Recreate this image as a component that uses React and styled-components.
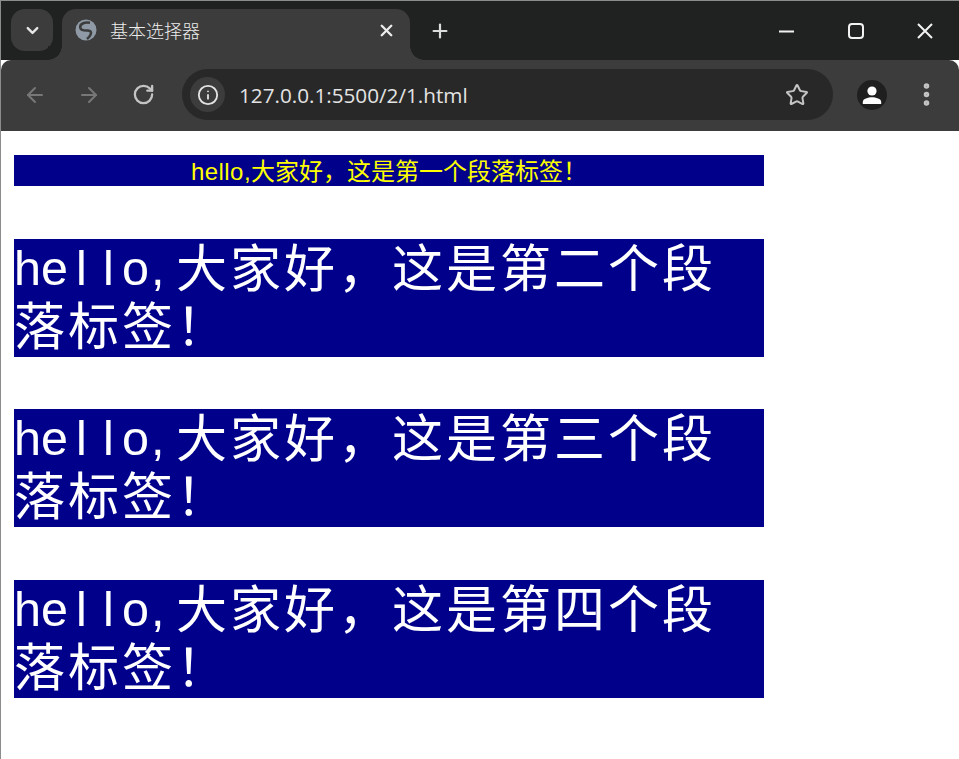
import React from 'react'
import styled, { createGlobalStyle } from 'styled-components'
import { ArrowLeft, ArrowRight, RotateCw, Star, X, Plus, ChevronDown, Info, EllipsisVertical } from 'lucide-react'

const Global = createGlobalStyle`
  html, body { margin: 0; padding: 0; background: #fff; }
  body { font-family: "Noto Sans", "Noto Sans CJK SC", sans-serif; }
`

const Page = styled.div`
  width: 959px;
  height: 759px;
  box-sizing: border-box;
  border-left: 1px solid #8c8c8c;
  border-top: 1px solid #8c8c8c;
  overflow: hidden;
  background: #fff;
`

const TabStrip = styled.div`
  display: flex;
  align-items: flex-start;
  height: 59px;
  padding: 8px 0 0 10px;
  box-sizing: border-box;
  background: #202221;
`

const SquareButton = styled.div`
  display: flex;
  align-items: center;
  justify-content: center;
  width: 42px;
  height: 42px;
  border-radius: 14px;
  background: #3c3c3c;
  color: #e6e6e6;
`

const Tab = styled.div`
  position: relative;
  display: flex;
  align-items: center;
  width: 348px;
  height: 51px;
  margin-left: 9px;
  padding: 0 14px 9px 13px;
  box-sizing: border-box;
  border-radius: 14px 14px 0 0;
  background: #3c3c3c;
  color: #ececec;

  &::before, &::after {
    content: '';
    position: absolute;
    bottom: 0;
    width: 14px;
    height: 14px;
  }
  &::before {
    left: -14px;
    background: radial-gradient(circle at 0 0, #202221 13.5px, #3c3c3c 14px);
  }
  &::after {
    right: -14px;
    background: radial-gradient(circle at 100% 0, #202221 13.5px, #3c3c3c 14px);
  }
`

const TabTitle = styled.span`
  flex: 1;
  margin-left: 13px;
  font-size: 18px;
  font-family: "Noto Sans CJK SC", sans-serif;
  font-weight: 300;
`

const NewTab = styled.div`
  display: flex;
  margin: 11px 0 0 19px;
  color: #dcdcdc;
`

const WindowControls = styled.div`
  display: flex;
  margin-left: auto;
  height: 44px;
  color: #f2f2f2;
`

const WindowControl = styled.div`
  display: flex;
  align-items: center;
  justify-content: center;
  width: 69px;
  height: 44px;
`

const Toolbar = styled.div`
  display: flex;
  align-items: center;
  height: 71px;
  padding-bottom: 2px;
  box-sizing: border-box;
  border-radius: 10px 10px 0 0;
  background: #3c3c3c;
`

const NavButton = styled.div`
  display: flex;
  align-items: center;
  justify-content: center;
  width: 54px;
  flex: none;
  color: ${p => (p.$off ? '#777' : '#c4c4c4')};
`

const NavGroup = styled.div`
  display: flex;
  padding-left: 7px;
`

const MenuButton = styled(NavButton)`
  margin-left: 12px;
`

const AddressBar = styled.div`
  display: flex;
  align-items: center;
  width: 651px;
  height: 51px;
  margin-left: 12px;
  padding: 0 24px 0 8px;
  box-sizing: border-box;
  border-radius: 26px;
  background: #282828;
  color: #e3e3e3;
`

const SiteInfo = styled.div`
  display: flex;
  align-items: center;
  justify-content: center;
  width: 35px;
  height: 35px;
  border-radius: 50%;
  background: #3c3c3c;
`

const Url = styled.span`
  flex: 1;
  margin-left: 14px;
  font-size: 20.7px;
  font-family: "Open Sans", sans-serif;
`

const Avatar = styled.div`
  display: flex;
  align-items: center;
  justify-content: center;
  width: 30px;
  height: 30px;
  margin-left: 24px;
  border-radius: 50%;
  background: #1f1f1f;
`

const Content = styled.main`
  padding: 24px 0 0 13px;
`

const Para = styled.p`
  width: 750px;
  margin: 0 0 52.7px;
  padding-top: 2px;
  background: #00008b;
  color: #fff;
  font-family: "Liberation Sans", "Noto Sans CJK SC", sans-serif;
  font-size: 51px;
  letter-spacing: 3px;
  line-height: 58px;
`

const BannerPara = styled(Para)`
  color: #ff0;
  font-size: 24px;
  letter-spacing: 0;
  line-height: 29px;
  text-align: center;
`

const BannerLatin = styled.span`
  letter-spacing: .45px;
`

const HalfWidth = styled.span`
  display: inline-block;
  width: 27px;
  font-size: 48.5px;
  letter-spacing: 0;
  line-height: 1;
  vertical-align: 2px;
  text-align: ${p => (p.$flush ? 'left' : 'center')};
  text-indent: ${p => (p.$flush ? '2px' : '0')};
`

const Latin = ({ text }) => [...text].map((c, i) => (
  <HalfWidth key={i} $flush={c === ','}>{c}</HalfWidth>
))

const Globe = () => (
  <svg width="22" height="22" viewBox="0 0 22 22" fill="none">
    <circle cx="11" cy="11" r="10.5" fill="#8f9aa6" />
    <path d="M15 3.800C10 2.800 5 4.500 5.200 8.200 5.400 12 10 11.600 13 11.500c2.600 0 3.400 1.500 2.800 3.500-.5 1.800-2 3.500-3.800 5" stroke="#3c3c3c" strokeWidth="2.600" />
  </svg>
)

const Person = () => (
  <svg width="20" height="20" viewBox="0 0 20 20" fill="#fff">
    <circle cx="10" cy="6" r="4.600" />
    <path d="M0.800 19v-2.200c0-3 5.500-4.600 9.200-4.600s9.200 1.600 9.200 4.600V19z" />
  </svg>
)

const MinimizeIcon = () => (
  <svg width="15" height="15" viewBox="0 0 15 15" stroke="currentColor" strokeWidth="2" fill="none">
    <path d="M0 7.500h15" />
  </svg>
)

const MaximizeIcon = () => (
  <svg width="16" height="16" viewBox="0 0 16 16" stroke="currentColor" strokeWidth="2" fill="none">
    <rect x="1" y="1" width="14" height="14" rx="3" />
  </svg>
)

const CloseIcon = () => (
  <svg width="16" height="16" viewBox="0 0 16 16" stroke="currentColor" strokeWidth="2" fill="none">
    <path d="M1 1l14 14M15 1L1 15" />
  </svg>
)

const bodies = [
  '这是第二个段落标签！',
  '这是第三个段落标签！',
  '这是第四个段落标签！'
]

export default function App () {
  return (
    <Page lang='zh-CN'>
      <Global />
      <TabStrip>
        <SquareButton><ChevronDown size={19} strokeWidth={3} /></SquareButton>
        <Tab>
          <Globe />
          <TabTitle>基本选择器</TabTitle>
          <X size={19} strokeWidth={3} />
        </Tab>
        <NewTab><Plus size={22} strokeWidth={2.4} /></NewTab>
        <WindowControls>
          <WindowControl><MinimizeIcon /></WindowControl>
          <WindowControl><MaximizeIcon /></WindowControl>
          <WindowControl><CloseIcon /></WindowControl>
        </WindowControls>
      </TabStrip>
      <Toolbar>
        <NavGroup>
          <NavButton $off><ArrowLeft size={24} strokeWidth={2} /></NavButton>
          <NavButton $off><ArrowRight size={24} strokeWidth={2} /></NavButton>
          <NavButton><RotateCw size={23} strokeWidth={2.4} /></NavButton>
        </NavGroup>
        <AddressBar>
          <SiteInfo><Info size={22} strokeWidth={2} /></SiteInfo>
          <Url>127.0.0.1:5500/2/1.html</Url>
          <Star size={24} strokeWidth={2} color='#c4c4c4' />
        </AddressBar>
        <Avatar><Person /></Avatar>
        <MenuButton><EllipsisVertical size={29} strokeWidth={2.600} /></MenuButton>
      </Toolbar>
      <Content>
        <BannerPara><BannerLatin>hello,</BannerLatin>大家好，这是第一个段落标签！</BannerPara>
        {bodies.map(b => (
          <Para key={b}><Latin text='hello,' />大家好，{b}</Para>
        ))}
      </Content>
    </Page>
  )
}
